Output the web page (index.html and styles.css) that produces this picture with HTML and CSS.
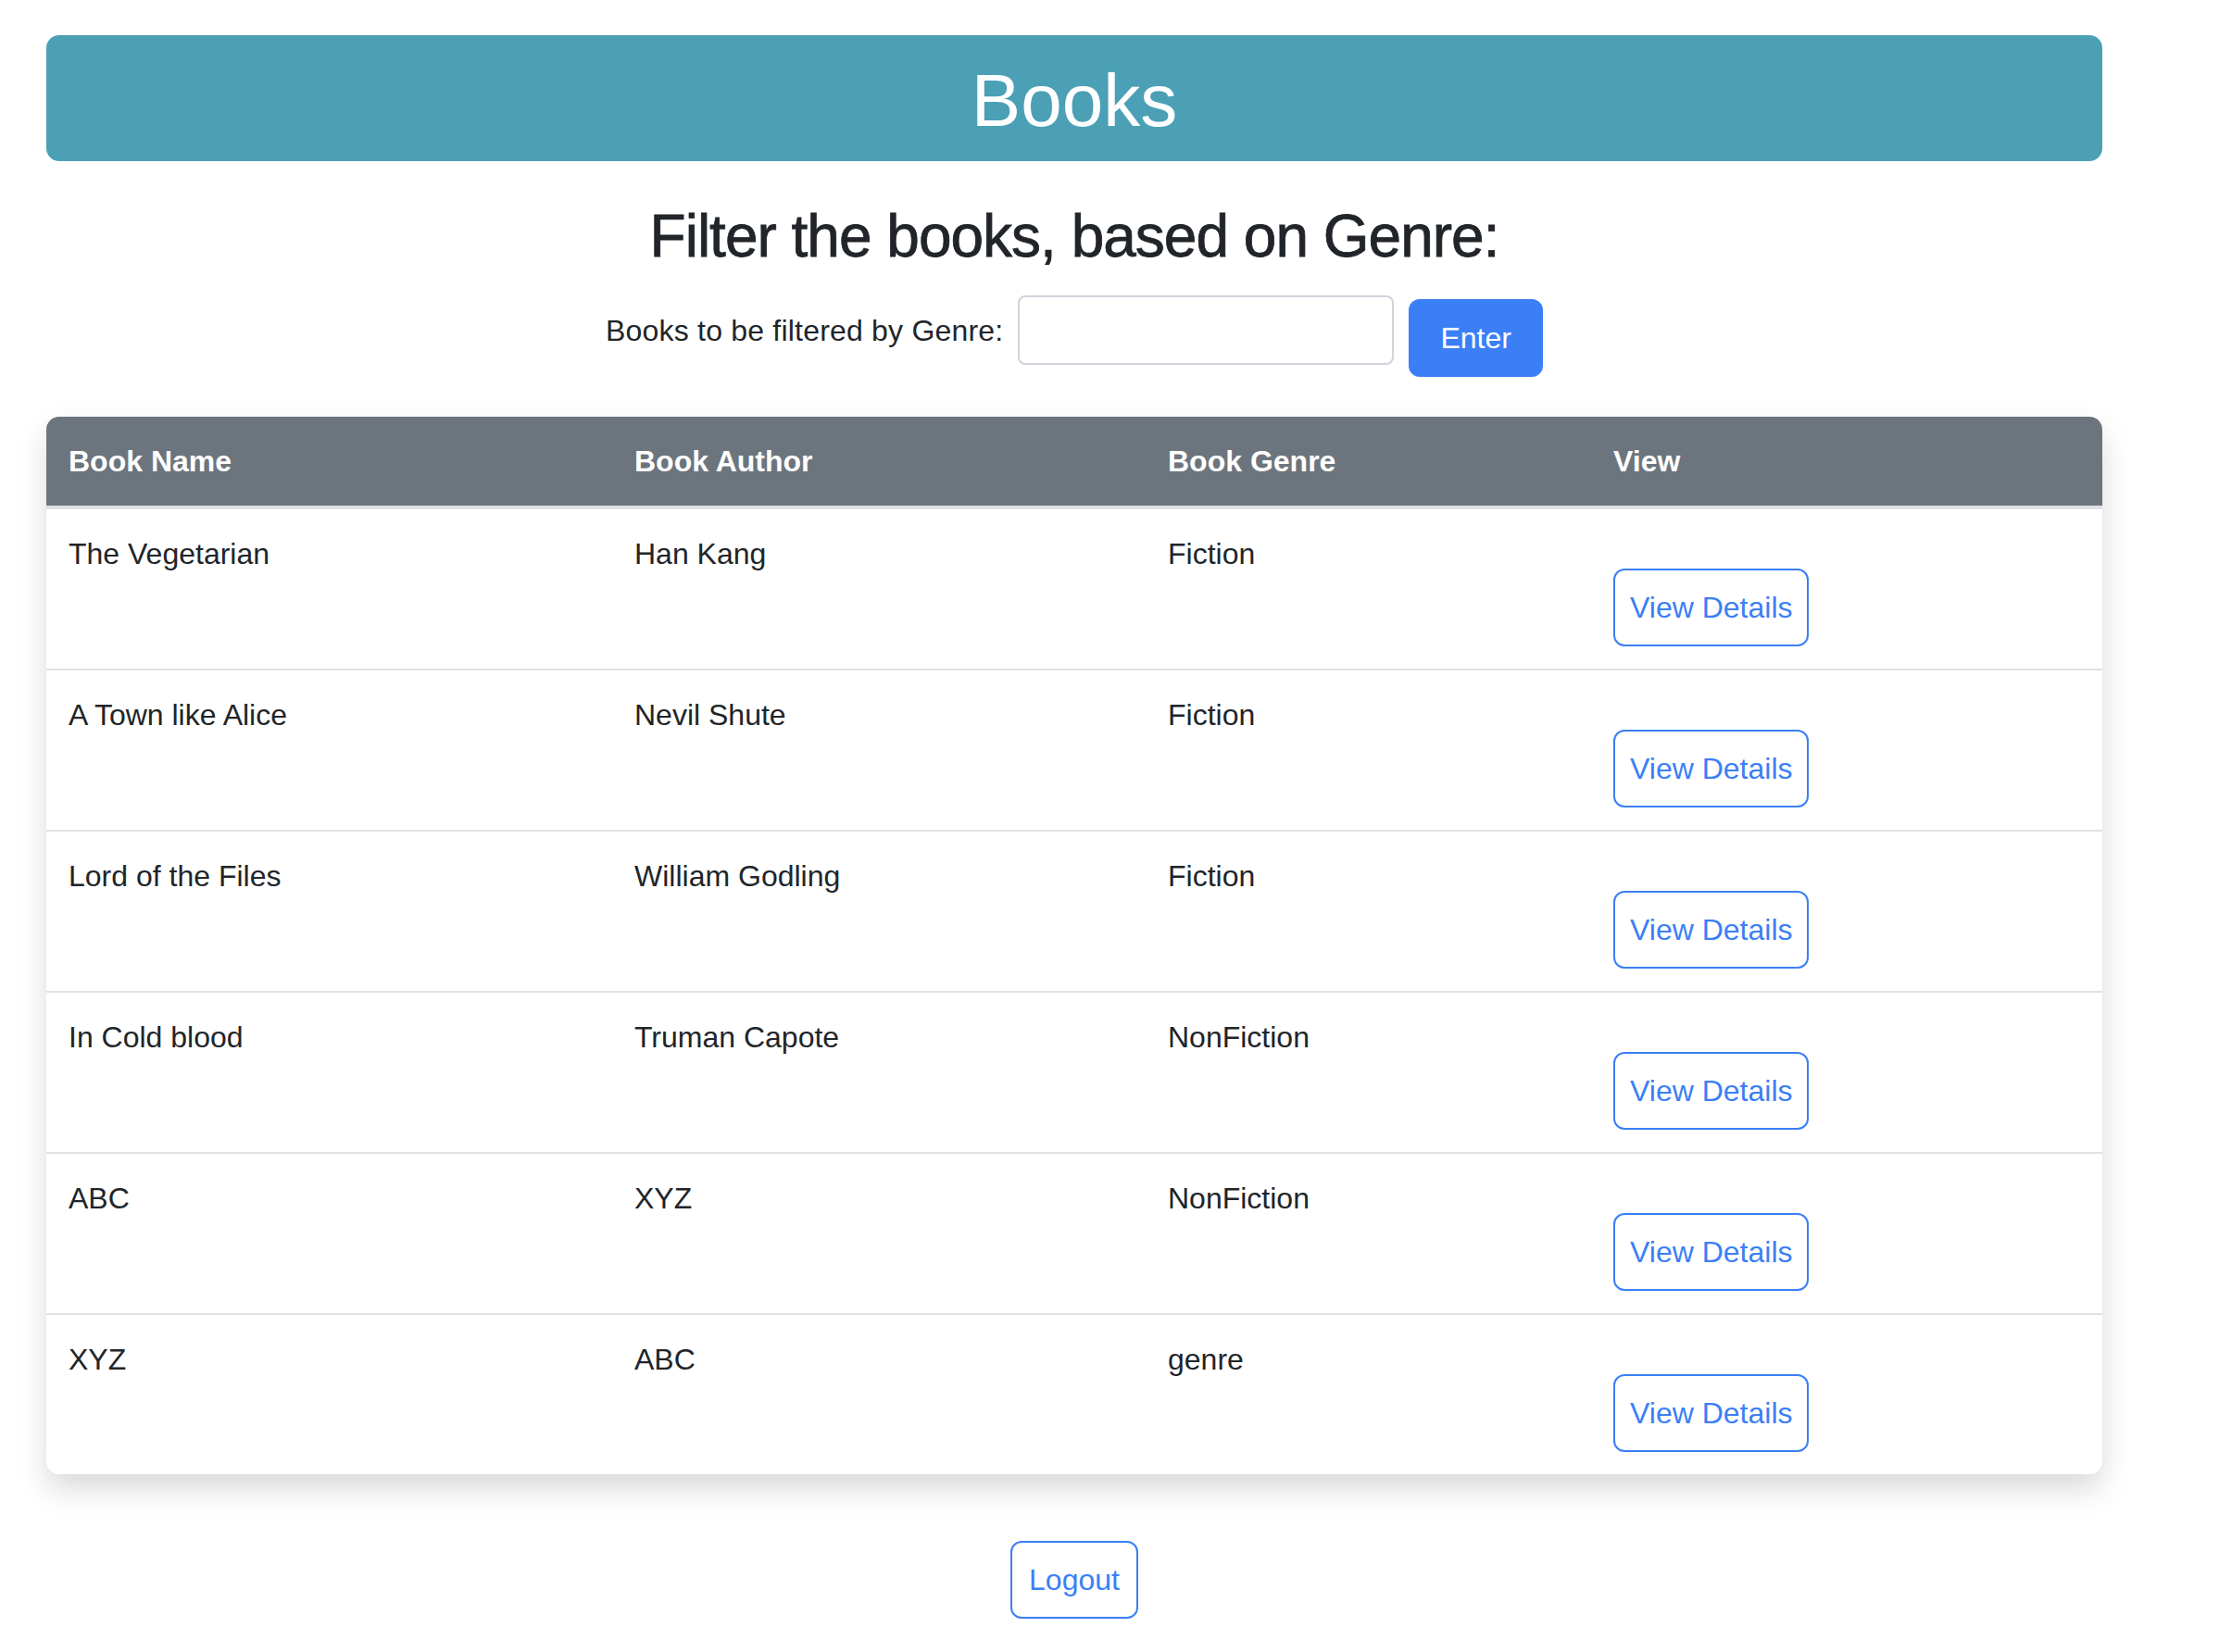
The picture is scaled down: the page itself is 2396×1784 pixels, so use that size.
FILE: index.html
```html
<!DOCTYPE html>
<html lang="en">
<head>
<meta charset="utf-8">
<title>Books</title>
<link rel="stylesheet" href="styles.css">
</head>
<body>
<div class="page">
  <header class="banner"><h1 class="banner-title">Books</h1></header>
  <h2 class="filter-title">Filter the books, based on Genre:</h2>
  <form class="filter-form">
    <label class="filter-label" for="genre">Books to be filtered by Genre:</label>
    <input class="filter-input" id="genre" type="text">
    <button class="btn-primary" type="button">Enter</button>
  </form>
  <div class="table-card">
    <table class="books">
      <thead>
        <tr>
          <th class="col-name">Book Name</th>
          <th class="col-author">Book Author</th>
          <th class="col-genre">Book Genre</th>
          <th class="col-view">View</th>
        </tr>
      </thead>
      <tbody>
        <tr><td>The Vegetarian</td><td>Han Kang</td><td>Fiction</td><td><button class="btn-outline btn-view" type="button">View Details</button></td></tr>
        <tr><td>A Town like Alice</td><td>Nevil Shute</td><td>Fiction</td><td><button class="btn-outline btn-view" type="button">View Details</button></td></tr>
        <tr><td>Lord of the Files</td><td>William Godling</td><td>Fiction</td><td><button class="btn-outline btn-view" type="button">View Details</button></td></tr>
        <tr><td>In Cold blood</td><td>Truman Capote</td><td>NonFiction</td><td><button class="btn-outline btn-view" type="button">View Details</button></td></tr>
        <tr><td>ABC</td><td>XYZ</td><td>NonFiction</td><td><button class="btn-outline btn-view" type="button">View Details</button></td></tr>
        <tr><td>XYZ</td><td>ABC</td><td>genre</td><td><button class="btn-outline btn-view" type="button">View Details</button></td></tr>
      </tbody>
    </table>
  </div>
  <div class="logout-row"><button class="btn-outline btn-logout" type="button">Logout</button></div>
</div>
</body>
</html>
```
FILE: styles.css
```css
* { box-sizing: border-box; }
body {
  margin: 0;
  background: #fff;
  color: #212529;
  font-family: "Liberation Sans", Arial, sans-serif;
  font-size: 32px;
  line-height: 48px;
}
.page {
  width: 2220px;
  margin-left: 50px;
  padding-top: 38px;
  padding-bottom: 40px;
}
.banner {
  background: #4ba0b6;
  border-radius: 14px;
  height: 136px;
  display: flex;
  align-items: center;
  justify-content: center;
}
.banner-title {
  margin: 0;
  padding-top: 6px;
  font-size: 80px;
  line-height: 96px;
  font-weight: 400;
  color: #fff;
}
.filter-title {
  margin: 43px 0 25px;
  text-align: center;
  font-size: 64px;
  line-height: 77px;
  font-weight: 400;
  letter-spacing: -1px;
  -webkit-text-stroke: 0.8px #212529;
}
.filter-form {
  display: flex;
  justify-content: center;
  align-items: flex-start;
  gap: 16px;
  margin: 0 0 43px;
}
.filter-label {
  margin-top: 14px;
  font-size: 32px;
  line-height: 48px;
  letter-spacing: 0.2px;
}
.filter-input {
  width: 406px;
  height: 75px;
  border: 2px solid #ced4da;
  border-radius: 8px;
  padding: 0 24px;
  font: inherit;
  background: #fff;
}
.btn-primary {
  margin-top: 4px;
  height: 84px;
  padding: 0 34px;
  border: none;
  border-radius: 12px;
  background: #3b7ff6;
  color: #fff;
  font-family: inherit;
  font-size: 32px;
  line-height: 48px;
}
.table-card {
  border-radius: 14px;
  overflow: hidden;
  background: #fff;
  box-shadow: 0 16px 32px rgba(0, 0, 0, 0.15);
}
.books {
  width: 100%;
  border-collapse: separate;
  border-spacing: 0;
  table-layout: fixed;
}
.books th {
  background: #6c757d;
  color: #fff;
  text-align: left;
  font-weight: 700;
  padding: 24px;
  line-height: 48px;
  border-bottom: 4px solid #dee2e6;
}
.col-name { width: 611px; }
.col-author { width: 576px; }
.col-genre { width: 481px; }
.col-view { width: 552px; }
.books td {
  padding: 24px;
  vertical-align: top;
  line-height: 48px;
  border-bottom: 2px solid #dee2e6;
}
.books tbody tr:last-child td { border-bottom: none; }
.btn-outline {
  display: block;
  height: 84px;
  border: 2px solid #3b7ff6;
  border-radius: 12px;
  background: #fff;
  color: #3b7ff6;
  font-family: inherit;
  font-size: 32px;
  line-height: 48px;
}
.btn-view {
  margin-top: 40px;
  padding: 0 16px;
}
.logout-row {
  display: flex;
  justify-content: center;
  margin-top: 72px;
}
.btn-logout {
  padding: 0 18px;
}
```
